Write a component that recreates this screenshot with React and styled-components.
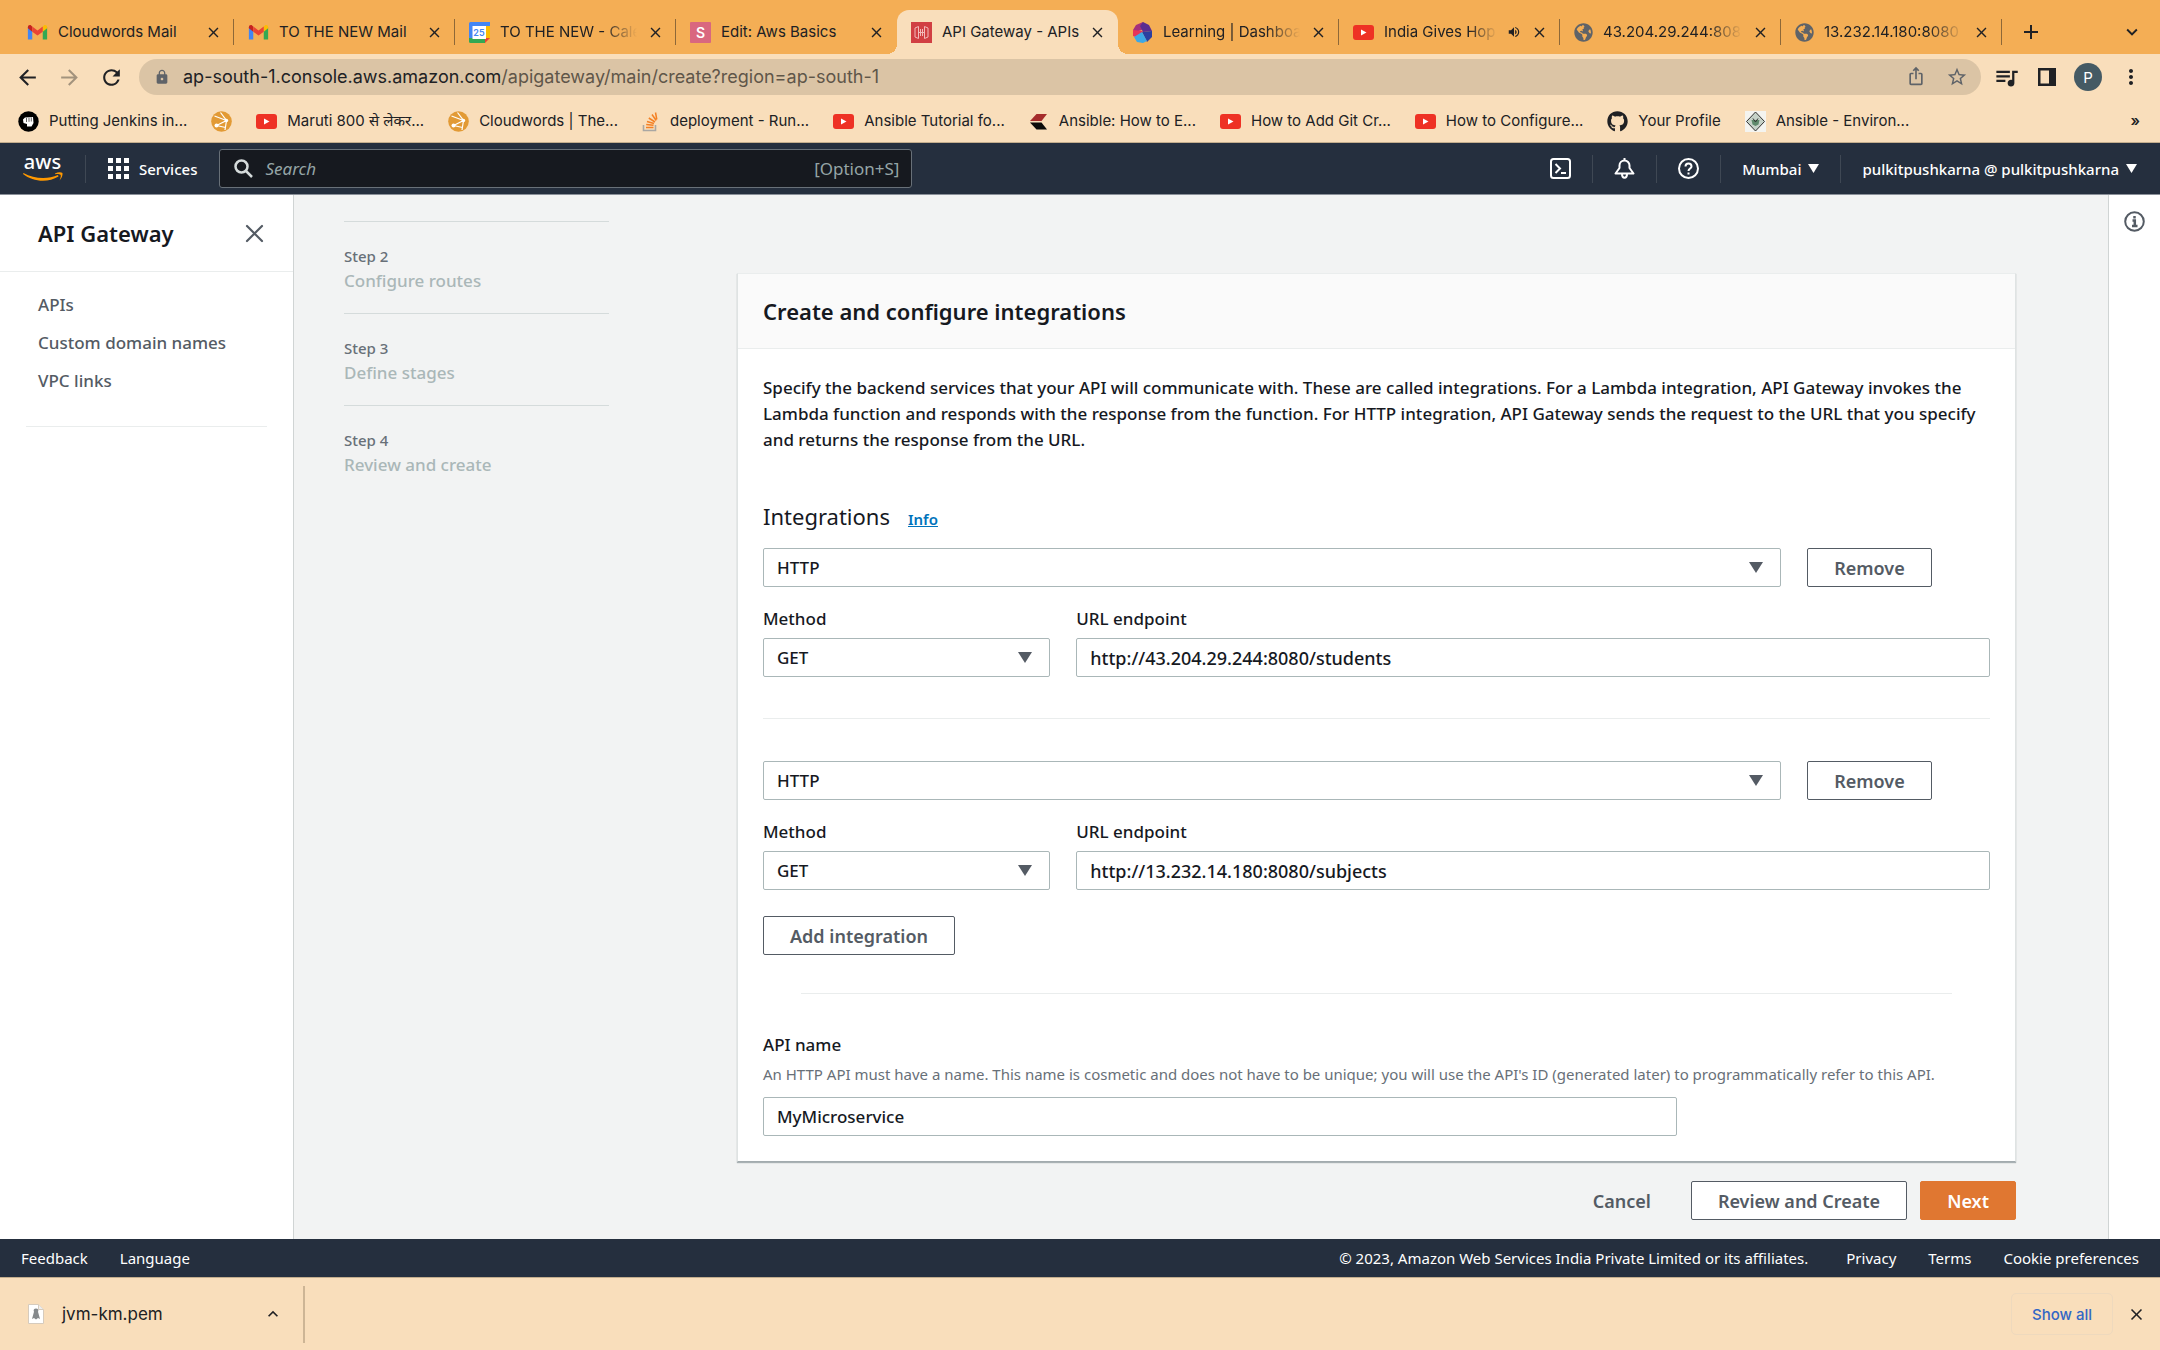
import React from "react"
import styled, { createGlobalStyle, css } from "styled-components"
import {
  MdAdd,
  MdArrowBack,
  MdArrowForward,
  MdClose,
  MdExpandLess,
  MdExpandMore,
  MdIosShare,
  MdLock,
  MdMoreVert,
  MdQueueMusic,
  MdRefresh,
  MdStarBorder,
  MdVolumeUp,
} from "react-icons/md"
import { FaGithub, FaGlobeAmericas } from "react-icons/fa"

const browserFont = `Inter, "Noto Sans", sans-serif`
const consoleFont = `"Noto Sans", "Open Sans", sans-serif`

const GlobalStyle = createGlobalStyle`
  *, *::before, *::after { box-sizing: border-box; }
  body { margin: 0; }
  h1, h2, h3, p, ul, ol { margin: 0; padding: 0; }
  ul, ol { list-style: none; }
  button, input, select { font: inherit; color: inherit; }
  a { color: inherit; text-decoration: none; }
  svg { display: block; flex: none; }
`

const Window = styled.div`
  display: flex;
  flex-direction: column;
  height: 100vh;
  overflow: hidden;
  font-family: ${browserFont};
  font-size: 15px;
  color: #202124;
`

const IconButton = styled.button`
  display: flex;
  padding: 0;
  border: 0;
  background: none;
  color: ${props => props.$color || "inherit"};
`

/* ---------- browser: tabs ---------- */

const TabStrip = styled.div`
  display: flex;
  flex: none;
  align-items: flex-end;
  height: 54px;
  padding: 0 17px 0 13px;
  background: #f4ae55;
`

const TabBox = styled.div`
  position: relative;
  display: flex;
  flex: 0 1 221px;
  align-items: center;
  gap: 10px;
  min-width: 0;
  height: 44px;
  padding: 0 12px 0 14px;
  border-radius: 12px 12px 0 0;

  ${props =>
    props.$active &&
    css`
      background: #f9debb;

      &::before,
      &::after {
        content: "";
        position: absolute;
        bottom: 0;
        width: 10px;
        height: 10px;
      }
      &::before {
        left: -10px;
        background: radial-gradient(circle at 0 0, transparent 10px, #f9debb 10px);
      }
      &::after {
        right: -10px;
        background: radial-gradient(circle at 100% 0, transparent 10px, #f9debb 10px);
      }
    `}

  ${props =>
    props.$divider &&
    css`
      &::after {
        content: "";
        position: absolute;
        right: 0;
        width: 1px;
        height: 26px;
        background: #8d6838;
      }
    `}
`

const TabTitle = styled.span`
  flex: 1;
  min-width: 0;
  overflow: hidden;
  white-space: nowrap;
  line-height: 22px;
  ${props => props.$fade && "mask-image: linear-gradient(to right, #000 75%, transparent);"}
`

const NewTab = styled(IconButton)`
  height: 44px;
  align-items: center;
  padding-left: 17px;
`

const TabMenu = styled(NewTab)`
  margin-left: auto;
  padding-left: 0;
`

/* ---------- browser: toolbar ---------- */

const Toolbar = styled.div`
  display: flex;
  flex: none;
  align-items: center;
  height: 46px;
  padding: 0 17px 0 15px;
  background: #f9debb;
`

const NavButtons = styled.div`
  display: flex;
  gap: 17px;
  width: 124px;
`

const Omnibox = styled.div`
  display: flex;
  flex: 1;
  align-items: center;
  height: 36px;
  padding: 0 13px 0 15px;
  border-radius: 18px;
  background: #dbc4a5;
`

const Address = styled.a`
  flex: 1;
  margin-left: 13px;
  font-size: 18px;
  line-height: 24px;
  color: #5f5649;

  strong {
    font-weight: 400;
    color: #202124;
  }
`

const OmniboxActions = styled.div`
  display: flex;
  gap: 20px;
`

const ToolbarActions = styled.div`
  display: flex;
  align-items: center;
  gap: 17px;
  margin-left: 12px;
`

const Avatar = styled.button`
  width: 28px;
  height: 28px;
  padding: 0;
  border: 0;
  border-radius: 50%;
  background: #455a64;
  color: #fff;
`

const Bookmarks = styled.nav`
  display: flex;
  flex: none;
  align-items: center;
  gap: 24px;
  height: 43px;
  padding: 0 20px 0 18px;
  border-bottom: 1px solid #c3ad8d;
  background: #f9debb;
  line-height: 22px;
  white-space: nowrap;
`

const Bookmark = styled.a`
  display: flex;
  align-items: center;
  gap: 10px;
`

const MoreBookmarks = styled(IconButton)`
  margin-left: auto;
  font-weight: 600;
`

/* ---------- console header ---------- */

const ConsoleHeader = styled.header`
  display: flex;
  flex: none;
  align-items: center;
  height: 52px;
  padding: 0 23px 0 22px;
  border-bottom: 1px solid #8a9099;
  background: #252f3e;
  font-family: ${consoleFont};
  font-weight: 500;
  color: #fff;
`

const Logo = styled.a`
  margin-right: 21px;
`

const Rule = styled.span`
  width: 1px;
  height: 28px;
  background: #3f4854;
`

const Services = styled(IconButton)`
  align-items: center;
  gap: 10px;
  padding: 0 22px;
`

const SearchBox = styled.label`
  display: flex;
  flex: 0 1 693px;
  align-items: center;
  gap: 12px;
  height: 39px;
  padding: 0 12px 0 14px;
  border: 1px solid #687078;
  border-radius: 3px;
  background: #16191f;
  font-size: 17px;
  font-weight: 400;
  color: #95a5a6;

  input {
    flex: 1;
    min-width: 0;
    padding: 0;
    border: 0;
    outline: 0;
    background: none;
  }
  input::placeholder {
    font-style: italic;
    color: #95a5a6;
  }
`

const HeaderTools = styled.div`
  display: flex;
  align-items: center;
  gap: 21px;
  margin-left: auto;
`

const HeaderMenu = styled(IconButton)`
  align-items: center;
  gap: 7px;
`

/* ---------- console body ---------- */

const Body = styled.div`
  display: flex;
  flex: 1;
  min-height: 0;
  font-family: ${consoleFont};
  font-size: 17px;
  font-weight: 500;
  line-height: 26px;
  color: #16191f;
`

const Sidebar = styled.aside`
  flex: none;
  width: 294px;
  border-right: 1px solid #d0d4d4;
  background: #fff;
`

const SidebarHead = styled.div`
  display: flex;
  align-items: center;
  justify-content: space-between;
  height: 77px;
  padding: 0 29px 0 38px;
  border-bottom: 1px solid #eaeded;
`

const Title = styled.h2`
  font-size: 22px;
  font-weight: 600;
  line-height: 30px;
`

const SidebarLinks = styled.ul`
  display: grid;
  gap: 12px;
  margin: 0 26px;
  padding: 20px 12px 32px;
  border-bottom: 1px solid #eaeded;
  color: #545b64;
`

const Main = styled.main`
  display: flex;
  flex: 1;
  align-items: flex-start;
  gap: 128px;
  min-width: 0;
  padding: 0 92px 0 50px;
  overflow: hidden;
  background: #f2f3f3;
`

const Steps = styled.ol`
  flex: none;
  width: 265px;
  /* the list is scrolled, only the tail of the first step shows */
  margin-top: -65px;
`

const Step = styled.li`
  height: 92px;
  padding-top: 24px;
  border-bottom: 1px solid #d5dbdb;
  color: ${props => (props.$current ? "#16191f" : "#aab7b8")};

  &:last-child {
    border-bottom: 0;
  }

  small {
    display: block;
    margin-bottom: 2px;
    font-size: 15px;
    line-height: 20px;
    color: #687078;
  }
`

const Content = styled.form`
  flex: 1;
  min-width: 0;
  margin-top: 78px;
`

const Card = styled.section`
  border: 1px solid #dfe3e3;
  border-top-color: #eaeded;
  border-bottom-color: #a3abae;
  background: #fff;
  box-shadow: 0 1px 1px rgba(0, 28, 36, 0.3);
`

const CardHead = styled.div`
  display: flex;
  align-items: center;
  height: 75px;
  padding: 0 25px;
  border-bottom: 1px solid #eaeded;
  background: #fafafa;
`

const CardBody = styled.div`
  padding: 26px 25px 25px;
`

const Subtitle = styled.h3`
  display: flex;
  align-items: baseline;
  gap: 18px;
  margin: 48px 0 14px;
  font-size: 22px;
  font-weight: 400;
  line-height: 30px;

  a {
    font-size: 15px;
    font-weight: 600;
    text-decoration: underline;
    color: #0073bb;
  }
`

const Fields = styled.div`
  display: grid;
  grid-template-columns: repeat(12, minmax(0, 1fr));
  gap: 20px 26px;
`

const Field = styled.div`
  grid-column: span ${props => props.$span};
  display: grid;
  gap: 7px;
`

const Label = styled.label`
  line-height: 24px;
`

const controlBox = css`
  width: 100%;
  height: 39px;
  padding: 0 13px;
  border: 1px solid #aab7b8;
  border-radius: 2px;
  background: #fff;
`

const Input = styled.input`
  ${controlBox}

  &[type="url"] {
    font-size: 18px;
  }
`

const SelectBox = styled.div`
  display: grid;
  align-items: center;
  grid-column: span ${props => props.$span || 1};

  > * {
    grid-area: 1 / 1;
  }
  svg {
    justify-self: end;
    margin-right: 18px;
    pointer-events: none;
  }
`

const SelectControl = styled.select`
  ${controlBox}
  appearance: none;
`

const Hint = styled.p`
  font-size: 15px;
  font-weight: 400;
  line-height: 20px;
  color: #687078;
`

const Divider = styled.hr`
  margin: ${props => (props.$inset ? "38px 38px 39px" : "41px 0 42px")};
  border: 0;
  border-top: 1px solid #eaeded;
`

const Button = styled.button`
  justify-self: start;
  height: 39px;
  padding: 0 26px;
  border: 1px solid #545b64;
  border-radius: 2px;
  background: #fff;
  font-size: 18px;
  font-weight: 600;
  white-space: nowrap;
  color: #545b64;

  ${props =>
    props.$kind === "link" &&
    css`
      border-color: transparent;
      background: none;
    `}
  ${props =>
    props.$kind === "primary" &&
    css`
      border-color: #e07731;
      background: #e07731;
      color: #fff;
    `}
`

const RemoveCell = styled.div`
  grid-column: span 2;
`

const AddRow = styled.div`
  margin-top: 26px;
`

const NameField = styled.div`
  display: grid;
  gap: 7px;

  ${Fields} {
    margin-top: 6px;
  }
`

const Actions = styled.div`
  display: flex;
  justify-content: flex-end;
  gap: 13px;
  margin-top: 19px;
`

const Rail = styled.aside`
  display: flex;
  flex: none;
  justify-content: center;
  width: 52px;
  padding-top: 16px;
  border-left: 1px solid #d0d4d4;
  background: #fff;
`

const Footer = styled.footer`
  display: flex;
  flex: none;
  align-items: center;
  gap: 32px;
  height: 38px;
  padding: 0 21px;
  background: #252f3e;
  font-family: ${consoleFont};
  line-height: 20px;
  color: #fff;
`

const Copyright = styled.span`
  margin: 0 6px 0 auto;
`

/* ---------- browser: downloads ---------- */

const Downloads = styled.div`
  display: flex;
  flex: none;
  align-items: center;
  height: 73px;
  padding: 0 14px 0 28px;
  border-top: 1px solid #c3ad8d;
  background: #f9debb;
`

const Download = styled.div`
  display: flex;
  align-items: center;
  gap: 18px;
  width: 277px;
  height: 57px;
  padding-right: 20px;
  border-right: 2px solid #cdb595;
  font-size: 17px;

  button {
    margin-left: auto;
  }
`

const ShowAll = styled.button`
  height: 42px;
  margin: 0 14px 0 auto;
  padding: 0 20px;
  border: 1px solid #eed9bd;
  border-radius: 5px;
  background: none;
  font-weight: 500;
  color: #3367c5;
`

/* ---------- drawings ---------- */

const Gmail = () => (
  <svg width="21" height="21" viewBox="0 0 24 24">
    <path d="M1 6v14h5V10z" fill="#4285f4" />
    <path d="M23 6v14h-5V10z" fill="#34a853" />
    <path d="M18 5.5V11l5-3.800V6c0-2-2-3.200-3.700-2z" fill="#fbbc04" />
    <path d="M1 6v1.200L6 11V5.500L4.700 4C3 2.800 1 4 1 6z" fill="#c5221f" />
    <path d="M6 5v6l6 4.500 6-4.500V5l-6 4.600z" fill="#ea4335" />
  </svg>
)

const Calendar = () => (
  <svg width="21" height="21" viewBox="0 0 21 21">
    <path d="M0 1.500A1.500 1.500 0 0 1 1.500 0H21v5H5v12H0z" fill="#4285f4" />
    <path d="M16 4h5v13h-5z" fill="#fbbc04" />
    <path d="M0 16h16v5H1.500A1.500 1.500 0 0 1 0 19.500z" fill="#34a853" />
    <path d="M16 16h5l-5 5z" fill="#ea4335" />
    <path d="M3.500 4H17v13H3.500z" fill="#fff" />
    <text x="10" y="14" textAnchor="middle" fontSize="9" fontWeight="600" fill="#4285f4">
      25
    </text>
  </svg>
)

const LetterS = () => (
  <svg width="21" height="21" viewBox="0 0 21 21">
    <rect width="21" height="21" rx="1" fill="#d9677f" />
    <text x="10.500" y="15.500" textAnchor="middle" fontSize="14" fontWeight="600" fill="#fff">
      S
    </text>
  </svg>
)

const ApiGateway = () => (
  <svg width="21" height="21" viewBox="0 0 21 21">
    <rect width="21" height="21" fill="#d13f43" />
    <g fill="none" stroke="#f3b9ba" strokeWidth="1">
      <path d="M7.500 4.500 4 6v9l3.500 1.500zM13.500 4.500 17 6v9l-3.500 1.500z" />
      <path d="M9.500 7v7M11.500 7v7M7.500 10.500h6" />
    </g>
  </svg>
)

const Gem = () => (
  <svg width="21" height="21" viewBox="0 0 21 21">
    <path d="M11 0 4 3 1 8l3 2 8-3z" fill="#a5307c" />
    <path d="M1 8 1 14l5 2 5-7z" fill="#e8345a" />
    <path d="M11 0 17 3l3 6-9 1-3-6z" fill="#5b2d91" />
    <path d="M20 9v6l-5 5-5-10z" fill="#2b3fa0" />
    <path d="M10 10 2 15l3 5 6 1 4-2z" fill="#3ea8e5" />
  </svg>
)

const YouTube = () => (
  <svg width="21" height="21" viewBox="0 0 21 21">
    <rect y="3" width="21" height="15" rx="3" fill="#ee3124" />
    <path d="M8 7.500v6l5.500-3z" fill="#fff" />
  </svg>
)

const Globe = () => <FaGlobeAmericas size={19} color="#5f6368" />

const GitHub = () => <FaGithub size={21} />

const Jenkins = () => (
  <svg width="21" height="21" viewBox="0 0 21 21">
    <circle cx="10.500" cy="10.500" r="10.200" fill="#000" />
    <path d="M5 8.500 7 6.500l8-.500.500 6-2 3.500H9V13l-3.500-1z" fill="#fff" />
    <path d="M8.500 7v4M11 6.800v4M13.300 6.500v4" stroke="#000" strokeWidth="0.600" />
  </svg>
)

const Cloudwords = () => (
  <svg width="21" height="21" viewBox="0 0 21 21">
    <circle cx="10.500" cy="10.500" r="10.300" fill="#e29a35" />
    <path
      d="M3.500 5 15.500 9.500 5.500 14.500M9.500 1.500 15.500 9.500 14 19M5.500 14.500 14.500 16.500"
      fill="none"
      stroke="#fff"
      strokeWidth="1.200"
    />
    <circle cx="15.500" cy="9.500" r="1.700" fill="#fff" />
    <circle cx="5.500" cy="14.500" r="2" fill="#fff" />
  </svg>
)

const StackOverflow = () => (
  <svg width="18" height="21" viewBox="0 0 18 21">
    <path d="M1.500 14v5.500h12V14" fill="none" stroke="#a9a7a3" strokeWidth="1.600" />
    <path
      d="M4 16.500h7.500M4.200 13.500l7.300.8M5 10.500l7 2M6.800 7l6.200 4M10 3.500l4.200 6M13.500 1.500l1.300 7"
      stroke="#f48024"
      strokeWidth="1.500"
    />
  </svg>
)

const Chevrons = () => (
  <svg width="20" height="21" viewBox="0 0 20 21">
    <path d="M7.500 3H18l-5.500 7H1z" fill="#a52c2b" />
    <path d="M1 11.500h11.500L18 18.500H7.500z" fill="#0b0b0b" />
  </svg>
)

const AnsibleDoc = () => (
  <svg width="21" height="21" viewBox="0 0 21 21">
    <path d="M0 0h21v21H0z" fill="#f4f4f0" />
    <path d="M10.500 1 19.500 10.500 10.500 20 1.500 10.500z" fill="#c6d2c8" stroke="#333" />
    <path d="M6.500 9h8l-1 4.500-3 1.500-3-1.500z" fill="#5f8a6c" />
    <path d="M8 7.500 10.500 11 13 7.500" fill="none" stroke="#333" />
  </svg>
)

const AwsLogo = () => (
  <svg width="42" height="36" viewBox="0 -4 42 36">
    <text x="20.500" y="14" textAnchor="middle" fontSize="20" fontWeight="500" fill="#fff">
      aws
    </text>
    <path d="M1 19c10 8 25 9 35.500 2.500l-.5-1.500C26 24.500 12 24 1.500 18z" fill="#f90" />
    <path d="M33 18.500c3-1.500 6-1.500 7.500-.5.300 2.500-1 5.500-3 7.500 1-2.500 1.800-4.500 1-5.700-1-.9-3.500-.9-5.500-.6z" fill="#f90" />
  </svg>
)

const ServiceGrid = () => (
  <svg width="21" height="21" viewBox="0 0 21 21" fill="#fff">
    {[0, 8, 16].flatMap(y => [0, 8, 16].map(x => <rect key={`${x}-${y}`} x={x} y={y} width="5" height="5" />))}
  </svg>
)

const Magnifier = () => (
  <svg width="19" height="19" viewBox="0 0 19 19" fill="none" stroke="#d5dbdb" strokeWidth="2.500">
    <circle cx="7.500" cy="7.500" r="6" />
    <path d="m12 12 6 6" />
  </svg>
)

const CloudShell = () => (
  <svg width="21" height="21" viewBox="0 0 21 21" fill="none" stroke="#fff" strokeWidth="2">
    <rect x="1" y="1" width="19" height="19" rx="2.500" />
    <path d="m5.500 6 4.500 4.500L5.500 15M11 15h5" />
  </svg>
)

const Bell = () => (
  <svg width="21" height="21" viewBox="0 0 21 21" fill="none" stroke="#fff" strokeWidth="2" strokeLinejoin="round">
    <path d="M1.500 15.500 5.500 10V7.500a5 5 0 0 1 10 0V10l4 5.500zM8 16c0 5 5 5 5 0M10.500 0v3" />
  </svg>
)

const Help = () => (
  <svg width="21" height="21" viewBox="0 0 21 21" fill="none" stroke="#fff" strokeWidth="2">
    <circle cx="10.500" cy="10.500" r="9.500" />
    <path d="M7.500 8.500c0-4 6-4 6 0 0 2-3 2.200-3 4.500M10.500 14.500v2" />
  </svg>
)

const Info = () => (
  <svg width="21" height="21" viewBox="0 0 21 21" fill="none" stroke="#545b64" strokeWidth="2">
    <circle cx="10.500" cy="10.500" r="9.300" />
    <path d="M8.500 9.500h2.300v5M8 15h5.500M10.500 5v2.500" strokeWidth="2.500" />
  </svg>
)

const Cross = () => (
  <svg width="19" height="19" viewBox="0 0 19 19" stroke="#545b64" strokeWidth="2.200" strokeLinecap="round">
    <path d="m2 2 15 15M17 2 2 17" />
  </svg>
)

const Caret = ({ width = 14, height = 11, color = "#545b64" }) => (
  <svg width={width} height={height} viewBox="0 0 14 11" preserveAspectRatio="none">
    <path d="M0 0h14L7 11z" fill={color} />
  </svg>
)

const SidePanel = () => (
  <svg width="20" height="20" viewBox="0 0 20 20">
    <path d="M1 1h18v18H1zm2.500 2.500v13H12v-13z" fill="#202124" fillRule="evenodd" />
  </svg>
)

const PemFile = () => (
  <svg width="16" height="20" viewBox="0 0 16 20">
    <path d="M.5.500h10l5 5v14H.5z" fill="#fff" stroke="#d6cbbd" />
    <path d="M10.500.500v5h5" fill="#eee" stroke="#d6cbbd" />
    <path d="M8 4.500c2 0 3 1.800 2 3.300L12 15l-2-1-2 1.500L6 14l-2 1 2-7.200c-1-1.500 0-3.300 2-3.300z" fill="#85898c" />
  </svg>
)

/* ---------- data ---------- */

const tabs = [
  { title: "Cloudwords Mail", icon: Gmail, divider: true },
  { title: "TO THE NEW Mail", icon: Gmail, divider: true },
  { title: "TO THE NEW - Cale", icon: Calendar, divider: true, fade: true },
  { title: "Edit: Aws Basics", icon: LetterS },
  { title: "API Gateway - APIs", icon: ApiGateway, active: true },
  { title: "Learning | Dashboa", icon: Gem, divider: true, fade: true },
  { title: "India Gives Hop", icon: YouTube, divider: true, fade: true, sound: true },
  { title: "43.204.29.244:8080", icon: Globe, divider: true, fade: true },
  { title: "13.232.14.180:8080", icon: Globe, divider: true, fade: true },
]

const bookmarks = [
  { title: "Putting Jenkins in...", icon: Jenkins },
  { title: "", icon: Cloudwords },
  { title: "Maruti 800 से लेकर...", icon: YouTube },
  { title: "Cloudwords | The...", icon: Cloudwords },
  { title: "deployment - Run...", icon: StackOverflow },
  { title: "Ansible Tutorial fo...", icon: YouTube },
  { title: "Ansible: How to E...", icon: Chevrons },
  { title: "How to Add Git Cr...", icon: YouTube },
  { title: "How to Configure...", icon: YouTube },
  { title: "Your Profile", icon: GitHub },
  { title: "Ansible - Environ...", icon: AnsibleDoc },
]

const steps = ["Create an API", "Configure routes", "Define stages", "Review and create"]

/* ---------- components ---------- */

const Tab = ({ title, icon: Icon, active, divider, fade, sound }) => (
  <TabBox $active={active} $divider={divider}>
    <Icon />
    <TabTitle $fade={fade}>{title}</TabTitle>
    {sound && <MdVolumeUp size={14} />}
    <IconButton aria-label={`Close ${title}`}>
      <MdClose size={17} />
    </IconButton>
  </TabBox>
)

const Select = ({ id, span, value, label }) => (
  <SelectBox $span={span}>
    <SelectControl id={id} aria-label={label} defaultValue={value}>
      <option>{value}</option>
    </SelectControl>
    <Caret />
  </SelectBox>
)

const Integration = ({ id, url }) => (
  <Fields>
    <Select id={`type-${id}`} span={10} value="HTTP" label="Integration type" />
    <RemoveCell>
      <Button type="button">Remove</Button>
    </RemoveCell>
    <Field $span={3}>
      <Label htmlFor={`method-${id}`}>Method</Label>
      <Select id={`method-${id}`} value="GET" />
    </Field>
    <Field $span={9}>
      <Label htmlFor={`url-${id}`}>URL endpoint</Label>
      <Input type="url" id={`url-${id}`} defaultValue={url} />
    </Field>
  </Fields>
)

const Browser = () => (
  <>
    <TabStrip>
      {tabs.map(tab => (
        <Tab key={tab.title} {...tab} />
      ))}
      <NewTab aria-label="New tab">
        <MdAdd size={24} />
      </NewTab>
      <TabMenu aria-label="Search tabs">
        <MdExpandMore size={22} />
      </TabMenu>
    </TabStrip>
    <Toolbar>
      <NavButtons>
        <IconButton aria-label="Back">
          <MdArrowBack size={25} />
        </IconButton>
        <IconButton aria-label="Forward" $color="#a3937d">
          <MdArrowForward size={25} />
        </IconButton>
        <IconButton aria-label="Reload">
          <MdRefresh size={25} />
        </IconButton>
      </NavButtons>
      <Omnibox>
        <MdLock size={16} color="#5f6368" />
        <Address href="#">
          <strong>ap-south-1.console.aws.amazon.com</strong>
          /apigateway/main/create?region=ap-south-1
        </Address>
        <OmniboxActions>
          <IconButton aria-label="Share" $color="#5f6368">
            <MdIosShare size={20} />
          </IconButton>
          <IconButton aria-label="Bookmark" $color="#5f6368">
            <MdStarBorder size={22} />
          </IconButton>
        </OmniboxActions>
      </Omnibox>
      <ToolbarActions>
        <IconButton aria-label="Media">
          <MdQueueMusic size={27} />
        </IconButton>
        <IconButton aria-label="Side panel">
          <SidePanel />
        </IconButton>
        <Avatar>P</Avatar>
        <IconButton aria-label="Menu">
          <MdMoreVert size={24} />
        </IconButton>
      </ToolbarActions>
    </Toolbar>
    <Bookmarks>
      {bookmarks.map(({ title, icon: Icon }) => (
        <Bookmark key={title} href="#" aria-label={title || "Cloudwords"}>
          <Icon />
          {title}
        </Bookmark>
      ))}
      <MoreBookmarks>»</MoreBookmarks>
    </Bookmarks>
  </>
)

const Header = () => (
  <ConsoleHeader>
    <Logo href="#" aria-label="AWS home">
      <AwsLogo />
    </Logo>
    <Rule />
    <Services>
      <ServiceGrid />
      Services
    </Services>
    <SearchBox>
      <Magnifier />
      <input placeholder="Search" aria-label="Search" />
      [Option+S]
    </SearchBox>
    <HeaderTools>
      <IconButton aria-label="CloudShell">
        <CloudShell />
      </IconButton>
      <Rule />
      <IconButton aria-label="Notifications">
        <Bell />
      </IconButton>
      <Rule />
      <IconButton aria-label="Support">
        <Help />
      </IconButton>
      <Rule />
      <HeaderMenu>
        Mumbai
        <Caret width={11} height={9} color="#fff" />
      </HeaderMenu>
      <Rule />
      <HeaderMenu>
        pulkitpushkarna @ pulkitpushkarna
        <Caret width={11} height={9} color="#fff" />
      </HeaderMenu>
    </HeaderTools>
  </ConsoleHeader>
)

export default function App() {
  return (
    <Window>
      <GlobalStyle />
      <Browser />
      <Header />
      <Body>
        <Sidebar>
          <SidebarHead>
            <Title>API Gateway</Title>
            <IconButton aria-label="Close navigation">
              <Cross />
            </IconButton>
          </SidebarHead>
          <SidebarLinks>
            <li>
              <a href="#">APIs</a>
            </li>
            <li>
              <a href="#">Custom domain names</a>
            </li>
            <li>
              <a href="#">VPC links</a>
            </li>
          </SidebarLinks>
        </Sidebar>
        <Main>
          <Steps>
            {steps.map((name, i) => (
              <Step key={name} $current={i === 0}>
                <small>Step {i + 1}</small>
                {name}
              </Step>
            ))}
          </Steps>
          <Content>
            <Card>
              <CardHead>
                <Title>Create and configure integrations</Title>
              </CardHead>
              <CardBody>
                <p>
                  Specify the backend services that your API will communicate with. These are called integrations. For a
                  Lambda integration, API Gateway invokes the Lambda function and responds with the response from the
                  function. For HTTP integration, API Gateway sends the request to the URL that you specify and returns
                  the response from the URL.
                </p>
                <Subtitle>
                  Integrations
                  <a href="#">Info</a>
                </Subtitle>
                <Integration id="students" url="http://43.204.29.244:8080/students" />
                <Divider />
                <Integration id="subjects" url="http://13.232.14.180:8080/subjects" />
                <AddRow>
                  <Button type="button">Add integration</Button>
                </AddRow>
                <Divider $inset />
                <NameField>
                  <Label htmlFor="api-name">API name</Label>
                  <Hint>
                    An HTTP API must have a name. This name is cosmetic and does not have to be unique; you will use the
                    API's ID (generated later) to programmatically refer to this API.
                  </Hint>
                  <Fields>
                    <Field $span={9}>
                      <Input id="api-name" defaultValue="MyMicroservice" />
                    </Field>
                  </Fields>
                </NameField>
              </CardBody>
            </Card>
            <Actions>
              <Button type="button" $kind="link">
                Cancel
              </Button>
              <Button type="button">Review and Create</Button>
              <Button type="button" $kind="primary">
                Next
              </Button>
            </Actions>
          </Content>
        </Main>
        <Rail>
          <Info />
        </Rail>
      </Body>
      <Footer>
        <a href="#">Feedback</a>
        <a href="#">Language</a>
        <Copyright>© 2023, Amazon Web Services India Private Limited or its affiliates.</Copyright>
        <a href="#">Privacy</a>
        <a href="#">Terms</a>
        <a href="#">Cookie preferences</a>
      </Footer>
      <Downloads>
        <Download>
          <PemFile />
          jvm-km.pem
          <IconButton aria-label="Download options">
            <MdExpandLess size={20} />
          </IconButton>
        </Download>
        <ShowAll>Show all</ShowAll>
        <IconButton aria-label="Close downloads">
          <MdClose size={19} />
        </IconButton>
      </Downloads>
    </Window>
  )
}
